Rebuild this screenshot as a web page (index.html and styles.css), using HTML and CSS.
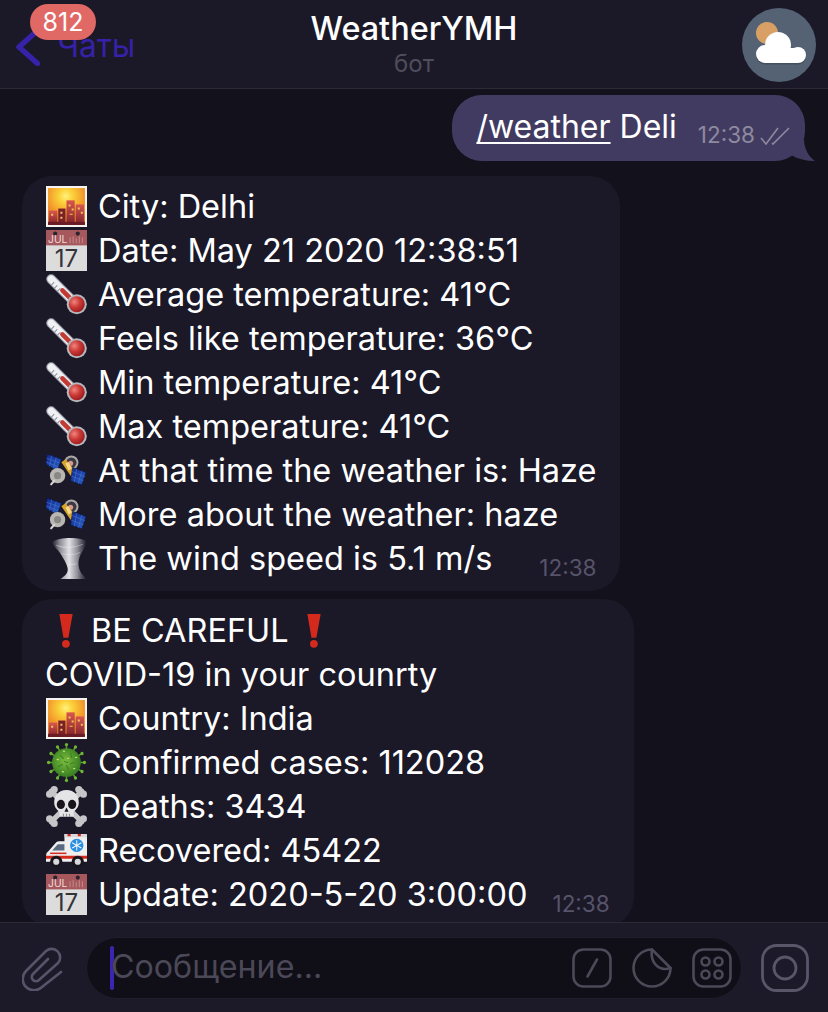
FILE: index.html
```html
<!DOCTYPE html>
<html lang="ru">
<head>
  <meta charset="UTF-8" />
  <meta name="viewport" content="width=device-width, initial-scale=1.0" />
  <title>WeatherYMH</title>
  <link rel="stylesheet" href="styles.css">
</head>
<body>
  <!-- emoji sprites -->
  <svg class="sprite" aria-hidden="true">
    <defs>
      <radialGradient id="sky" cx="0.48" cy="0.22" r="0.85">
        <stop offset="0" stop-color="#fff27e"/>
        <stop offset="0.22" stop-color="#fbd23a"/>
        <stop offset="0.6" stop-color="#f2952a"/>
        <stop offset="1" stop-color="#e4612a"/>
      </radialGradient>
      <linearGradient id="block" x1="0" y1="0" x2="0" y2="1">
        <stop offset="0" stop-color="#d9564e"/>
        <stop offset="1" stop-color="#7c2229"/>
      </linearGradient>
      <radialGradient id="bulb" cx="0.35" cy="0.35" r="0.7">
        <stop offset="0" stop-color="#ef8680"/>
        <stop offset="0.5" stop-color="#cc3a36"/>
        <stop offset="1" stop-color="#9c1a1e"/>
      </radialGradient>
      <linearGradient id="panel" x1="0" y1="0" x2="1" y2="1">
        <stop offset="0" stop-color="#10278f"/>
        <stop offset="1" stop-color="#2a62c4"/>
      </linearGradient>
      <linearGradient id="funnel" x1="0" y1="0" x2="1" y2="0">
        <stop offset="0" stop-color="#77767f" stop-opacity="0.1"/>
        <stop offset="0.22" stop-color="#8c8b94"/>
        <stop offset="0.5" stop-color="#e2e2e6"/>
        <stop offset="0.75" stop-color="#8f8e98"/>
        <stop offset="1" stop-color="#77767f" stop-opacity="0.1"/>
      </linearGradient>
      <radialGradient id="germ" cx="0.45" cy="0.45" r="0.6">
        <stop offset="0" stop-color="#7cbc3e"/>
        <stop offset="1" stop-color="#33791f"/>
      </radialGradient>
      <g id="spike">
        <path d="M20 8 V2.500" stroke="#5aa02e" stroke-width="1.500"/>
        <circle cx="20" cy="2.500" r="1.600" fill="#6cb336"/>
      </g>
    </defs>

    <symbol id="e-city" viewBox="0 0 40 40">
      <rect width="40" height="40" fill="#f6f4f1"/>
      <rect x="2" y="2" width="36" height="36" fill="url(#sky)"/>
      <rect x="3" y="24" width="8" height="14" fill="url(#block)"/>
      <rect x="12" y="22" width="7" height="16" fill="#7a2028"/>
      <rect x="20" y="14" width="8" height="24" fill="url(#block)"/>
      <rect x="29" y="18" width="8" height="20" fill="url(#block)"/>
      <rect x="2" y="35" width="36" height="3" fill="#6a1c24"/>
      <path d="M14 25h2v2h-2zM14 30h2v2h-2zM22 18h2v2h-2zM25 22h2v2h-2zM31 21h2v2h-2zM34 25h2v2h-2zM5 27h2v2H5zM23 27h3v1h-3z" fill="#f2c25a"/>
    </symbol>

    <symbol id="e-cal" viewBox="0 0 40 40">
      <rect width="40" height="40" fill="#dcdcdc"/>
      <rect width="40" height="15" fill="#a6585c"/>
      <circle cx="9" cy="3.500" r="2" fill="#26222e"/>
      <circle cx="31" cy="3.500" r="2" fill="#26222e"/>
      <path d="M23 7h1v6h-1zM26 6h1v7h-1zM29 8h1v5h-1zM32 6h1v7h-1zM35 7h1v6h-1z" fill="#c08a8c"/>
    </symbol>

    <symbol id="e-therm" viewBox="0 0 40 40">
      <path d="M5 5 L26 26" stroke="#a4a8b2" stroke-width="9.500" stroke-linecap="round"/>
      <path d="M5 5 L26 26" stroke="#f0f1f4" stroke-width="7" stroke-linecap="round"/>
      <path d="M16 16 L27 27" stroke="#c23a34" stroke-width="4.500" stroke-linecap="round"/>
      <path d="M5 11 L8 8 M8 14 L11 11 M11 17 L14 14" stroke="#8d93a0" stroke-width="1"/>
      <circle cx="30" cy="29.500" r="9.800" fill="#b4b9be"/>
      <circle cx="30" cy="29.500" r="7.800" fill="url(#bulb)"/>
    </symbol>

    <symbol id="e-sat" viewBox="0 0 40 40">
      <circle cx="24.700" cy="12.300" r="7" fill="#a9a8a6"/>
      <circle cx="24.700" cy="12.300" r="5" fill="#3a3840"/>
      <circle cx="24" cy="13" r="2.500" fill="#d89a8c"/>
      <path d="M15 12 L19 9 L29 21 L24 25 Z" fill="#d6a32c"/>
      <path d="M19 13 L22 12 L25 18 L22 20 Z" fill="#f3d98a"/>
      <path d="M1 4 L15 9 L11 20 L0 14 Z" fill="url(#panel)" stroke="#0a1648" stroke-width=".6"/>
      <path d="M5.500 5.500 L3.500 16 M10 7.500 L7 18 M.5 8 L13 12.500 M0 11.500 L12 16.500" stroke="#4c74d0" stroke-width=".6"/>
      <path d="M26 17 L39 22 L35 34 L24 30 Z" fill="url(#panel)" stroke="#0a1648" stroke-width=".6"/>
      <path d="M30 18.500 L27.500 31.500 M35 20.500 L31.500 33 M25.500 21 L38 26 M24.500 25.500 L36.500 30" stroke="#4c74d0" stroke-width=".6"/>
      <circle cx="11.300" cy="25" r="7.500" fill="#b9b7b2"/>
      <circle cx="11.300" cy="25" r="3.500" fill="#8a8884"/>
      <path d="M8 30 L5 33.500" stroke="#d8d6d2" stroke-width="2" stroke-linecap="round"/>
    </symbol>

    <symbol id="e-storm" viewBox="0 0 40 40">
      <path d="M6 4 C12 -1 34 -1 39 3 C39 9 35 13 33 18 C31 23 31 30 35 35 C37 37 39 39 39 40 H14 C19 37 22 34 21 29 C20 24 17 20 14 15 C11 11 7 8 6 4 Z" fill="url(#funnel)"/>
      <path d="M10 7 C16 10 28 10 36 6 M15 15 C20 17 28 17 33 14 M20 25 C23 26 27 26 30 25" stroke="#f2f2f4" stroke-width="1" fill="none" opacity=".4"/>
    </symbol>

    <symbol id="e-bang" viewBox="0 0 40 40">
      <path d="M14 4 H27 L22.800 27 H18 Z" fill="#d42a1e"/>
      <circle cx="20.400" cy="33" r="3.800" fill="#d42a1e"/>
    </symbol>

    <symbol id="e-virus" viewBox="0 0 40 40">
      <use href="#spike"/>
      <use href="#spike" transform="rotate(30 20 20)"/>
      <use href="#spike" transform="rotate(60 20 20)"/>
      <use href="#spike" transform="rotate(90 20 20)"/>
      <use href="#spike" transform="rotate(120 20 20)"/>
      <use href="#spike" transform="rotate(150 20 20)"/>
      <use href="#spike" transform="rotate(180 20 20)"/>
      <use href="#spike" transform="rotate(210 20 20)"/>
      <use href="#spike" transform="rotate(240 20 20)"/>
      <use href="#spike" transform="rotate(270 20 20)"/>
      <use href="#spike" transform="rotate(300 20 20)"/>
      <use href="#spike" transform="rotate(330 20 20)"/>
      <circle cx="20" cy="20" r="14" fill="url(#germ)"/>
      <path d="M14 13l3 3M24 11l1 4M28 20l-4 1M22 27l-2-4M12 24l4-2M18 19l3 1" stroke="#3b8424" stroke-width="1.200" stroke-linecap="round"/>
      <path d="M11 17h1M17 9h1M29 15h1M27 26h1M16 29h1M21 16h1" stroke="#b2dc74" stroke-width="1.400" stroke-linecap="round"/>
    </symbol>

    <symbol id="e-skull" viewBox="0 0 40 40">
      <path d="M5 5 L35 35 M35 5 L5 35" stroke="#c6c6c8" stroke-width="5" stroke-linecap="round"/>
      <circle cx="3.500" cy="8" r="3.500" fill="#c6c6c8"/><circle cx="8" cy="3.500" r="3.500" fill="#c6c6c8"/>
      <circle cx="36.500" cy="8" r="3.500" fill="#c6c6c8"/><circle cx="32" cy="3.500" r="3.500" fill="#c6c6c8"/>
      <circle cx="3.500" cy="32" r="3.500" fill="#c6c6c8"/><circle cx="8" cy="36.500" r="3.500" fill="#c6c6c8"/>
      <circle cx="36.500" cy="32" r="3.500" fill="#c6c6c8"/><circle cx="32" cy="36.500" r="3.500" fill="#c6c6c8"/>
      <path d="M20 4 C28 4 32 10 32 16 C32 21 29 23 27 25 V30 H13 V25 C11 23 8 21 8 16 C8 10 12 4 20 4 Z" fill="#e4e4e6"/>
      <ellipse cx="14.500" cy="18" rx="4" ry="4.500" fill="#17141c"/>
      <ellipse cx="25.500" cy="18" rx="4" ry="4.500" fill="#17141c"/>
      <path d="M20 21 L22 25 H18 Z" fill="#17141c"/>
      <path d="M17 27v3M20 27v3M23 27v3" stroke="#8b8b8e" stroke-width="1"/>
    </symbol>

    <symbol id="e-amb" viewBox="0 0 40 40">
      <path d="M18 4 H37 Q40 4 40 7 V31 H0 V25 Q0 22 3 20 L10 12 Q11 11 13 11 H18 Z" fill="#efeff0"/>
      <path d="M6 20 L11.500 14 H18 V20 Z" fill="#5a6a80"/>
      <rect x="18" y="4" width="22" height="3" fill="#d8d8da"/>
      <path d="M21 4h3v2h-3zM31 4h3v2h-3z" fill="#d42a1e"/>
      <path d="M0 25 H40 V28 H0 Z" fill="#d42a1e"/>
      <path d="M4 22 H20 V23.500 H4 Z" fill="#d42a1e"/>
      <circle cx="30" cy="15" r="6.500" fill="#2a8fe0"/>
      <path d="M30 10 V20 M25.500 12.500 L34.500 17.500 M34.500 12.500 L25.500 17.500" stroke="#eef6fc" stroke-width="1"/>
      <circle cx="10" cy="31" r="6" fill="#18161c"/><circle cx="10" cy="31" r="3" fill="#d8d8dc"/>
      <circle cx="31" cy="31" r="6" fill="#18161c"/><circle cx="31" cy="31" r="3" fill="#d8d8dc"/>
    </symbol>
  </svg>

  <div class="app">
    <header class="topbar">
      <div class="back">
        <svg class="chevron" viewBox="0 0 24 38"><path d="M21.500 2.500 L3 19 L21.500 35.500"/></svg>
        <span class="back-label">Чаты</span>
        <span class="badge">812</span>
      </div>
      <div class="title">
        <span class="title-name">WeatherYMH</span>
        <span class="title-sub">бот</span>
      </div>
      <div class="avatar-wrap">
        <svg class="avatar" viewBox="0 0 74 74">
          <circle cx="37" cy="37" r="37" fill="#546274"/>
          <circle cx="25" cy="25" r="11" fill="#d9a066"/>
          <g fill="#45505f" transform="translate(0 1.500)">
            <circle cx="23" cy="46" r="9"/><circle cx="36" cy="37" r="13"/><circle cx="56" cy="47" r="8"/><rect x="23" y="40" width="33" height="15"/>
          </g>
          <g fill="#fff">
            <circle cx="23" cy="46" r="9"/><circle cx="36" cy="37" r="13"/><circle cx="56" cy="47" r="8"/><rect x="23" y="40" width="33" height="15"/>
          </g>
        </svg>
      </div>
    </header>

    <main class="chat">
      <div class="bubble-out">
        <span class="out-text"><u>/weather</u> Deli</span>
        <span class="time-out">12:38</span>
        <svg class="checks" viewBox="0 0 30 18"><path d="M1 11 L6 17 L18 1 M12 16 L13 17 L29 1"/></svg>
        <svg class="tail" viewBox="0 0 24 22"><path d="M13 0 C13 10 18 18 24 22 C15 22 7 20 0 16 Z"/></svg>
      </div>

      <div class="bubble-in">
        <div class="row"><svg class="emoji"><use href="#e-city"/></svg>City: Delhi</div>
        <div class="row"><svg class="emoji" viewBox="0 0 40 40"><use href="#e-cal"/><text class="cal-month" x="2" y="13">JUL</text><text class="cal-day" x="20" y="36">17</text></svg>Date: May 21 2020 12:38:51</div>
        <div class="row"><svg class="emoji"><use href="#e-therm"/></svg>Average temperature: 41°C</div>
        <div class="row"><svg class="emoji"><use href="#e-therm"/></svg>Feels like temperature: 36°C</div>
        <div class="row"><svg class="emoji"><use href="#e-therm"/></svg>Min temperature: 41°C</div>
        <div class="row"><svg class="emoji"><use href="#e-therm"/></svg>Max temperature: 41°C</div>
        <div class="row"><svg class="emoji"><use href="#e-sat"/></svg>At that time the weather is: Haze</div>
        <div class="row"><svg class="emoji"><use href="#e-sat"/></svg>More about the weather: haze</div>
        <div class="row"><svg class="emoji"><use href="#e-storm"/></svg>The wind speed is 5.1 m/s<span class="time-in">12:38</span></div>
      </div>

      <div class="bubble-in">
        <div class="row row-tight"><svg class="emoji"><use href="#e-bang"/></svg>BE CAREFUL<svg class="emoji"><use href="#e-bang"/></svg></div>
        <div class="row">COVID-19 in your counrty</div>
        <div class="row"><svg class="emoji"><use href="#e-city"/></svg>Country: India</div>
        <div class="row"><svg class="emoji"><use href="#e-virus"/></svg>Confirmed cases: 112028</div>
        <div class="row"><svg class="emoji"><use href="#e-skull"/></svg>Deaths: 3434</div>
        <div class="row"><svg class="emoji"><use href="#e-amb"/></svg>Recovered: 45422</div>
        <div class="row"><svg class="emoji" viewBox="0 0 40 40"><use href="#e-cal"/><text class="cal-month" x="2" y="13">JUL</text><text class="cal-day" x="20" y="36">17</text></svg>Update: 2020-5-20 3:00:00<span class="time-in">12:38</span></div>
      </div>
    </main>

    <footer class="composer">
      <svg class="clip" viewBox="0 0 41 47"><path d="M39 28 L20 43 A11 11 0 0 1 4 27 L24 7 A8.500 8.500 0 0 1 36 19 L17 36 A4 4 0 0 1 11 30 L26 15"/></svg>
      <div class="input">
        <span class="caret"></span>
        <span class="placeholder">Сообщение...</span>
        <div class="input-icons">
          <svg class="tool" viewBox="0 0 40 40"><rect x="1.500" y="1.500" width="37" height="37" rx="10"/><path d="M15.500 28.500 L25 11.500"/></svg>
          <svg class="tool" viewBox="0 0 40 40"><path d="M20 1.500 A18.500 18.500 0 1 0 38.500 20 Z"/><path d="M20 1.500 C18 14 26 24 38.500 20"/></svg>
          <svg class="tool" viewBox="0 0 40 40"><rect x="1.500" y="1.500" width="37" height="37" rx="10"/><circle cx="13.500" cy="13.500" r="4"/><circle cx="26.500" cy="13.500" r="4"/><circle cx="13.500" cy="26.500" r="4"/><circle cx="26.500" cy="26.500" r="4"/></svg>
        </div>
      </div>
      <svg class="camera" viewBox="0 0 48 48"><rect x="1.500" y="1.500" width="45" height="45" rx="14"/><circle cx="24" cy="24" r="11"/></svg>
    </footer>
  </div>
</body>
</html>
```
FILE: styles.css
```css
* {
  box-sizing: border-box;
}
body {
  margin: 0;
  background-color: #13111c;
  color: #ffffff;
  font-family: Inter, 'Noto Sans', sans-serif;
}
.sprite {
  position: absolute;
  width: 0;
  height: 0;
}
.app {
  display: flex;
  flex-direction: column;
  height: 100vh;
  overflow: hidden;
}

/* top bar */
.topbar {
  display: grid;
  grid-template-columns: 1fr auto 1fr;
  flex: 0 0 89px;
  background-color: #1b1828;
  border-bottom: 1px solid #2c2a39;
}
.back {
  position: relative;
  display: flex;
  align-items: flex-start;
  padding: 28px 0 0 16px;
}
.chevron {
  width: 24px;
  height: 38px;
  fill: none;
  stroke: #3622a8;
  stroke-width: 5.5;
  stroke-linecap: round;
  stroke-linejoin: round;
}
.back-label {
  margin-left: 17px;
  font-size: 31.5px;
  line-height: 36px;
  color: #3622a8;
}
.badge {
  position: absolute;
  left: 30px;
  top: 4px;
  width: 66px;
  height: 36px;
  border-radius: 18px;
  background-color: #e06865;
  font-size: 25px;
  line-height: 36px;
  text-align: center;
}
.title {
  display: flex;
  flex-direction: column;
  align-items: center;
  padding-top: 10px;
}
.title-name {
  font-size: 32.4px;
  font-weight: 500;
  line-height: 38px;
}
.title-sub {
  margin-top: 1px;
  font-size: 24px;
  line-height: 30px;
  color: #4f4d5a;
}
.avatar-wrap {
  display: flex;
  justify-content: flex-end;
  padding: 8px 12px 0 0;
}
.avatar {
  width: 74px;
  height: 74px;
}

/* messages */
.chat {
  flex: 1;
  min-height: 0;
  overflow: hidden;
  display: flex;
  flex-direction: column;
  align-items: flex-start;
  padding: 6px 0 0 22px;
}
.chat > * {
  flex-shrink: 0;
}
.bubble-out {
  position: relative;
  align-self: flex-end;
  display: flex;
  align-items: center;
  height: 66px;
  margin: 0 23px 15px 0;
  padding: 0 15px 0 24px;
  border-radius: 30px;
  background-color: #423b61;
}
.out-text {
  margin-bottom: 2px;
  font-size: 32px;
  line-height: 44px;
}
.out-text u {
  text-underline-offset: 4px;
  text-decoration-thickness: 2px;
}
.time-out {
  margin: 13px 0 0 21px;
  font-size: 22.500px;
  color: #8d8a9f;
}
.checks {
  width: 30px;
  height: 18px;
  margin: 15px 0 0 5px;
  fill: none;
  stroke: #8d8a9f;
  stroke-width: 1.6;
}
.tail {
  position: absolute;
  right: -10px;
  bottom: 0;
  width: 24px;
  height: 22px;
  fill: #423b61;
}
.bubble-in {
  margin-bottom: 8px;
  padding: 9px 24px 10px 23px;
  border-radius: 30px;
  background-color: #1b1828;
}
.bubble-in + .bubble-in {
  padding-top: 10px;
}
.row {
  display: flex;
  align-items: center;
  height: 44px;
  padding-bottom: 2px;
  font-size: 32.5px;
  white-space: nowrap;
}
.emoji {
  flex: 0 0 41px;
  width: 41px;
  height: 41px;
  margin: 0 11px 0 1px;
  overflow: visible;
}
.row-tight .emoji {
  margin: 0 5px 0 0;
}
.row-tight .emoji:last-child {
  margin: 0 0 0 4px;
}
.time-in {
  margin: 18px 0 0 auto;
  padding-left: 25px;
  font-size: 22.500px;
  color: #57546a;
}
.cal-month {
  font-family: Inter, sans-serif;
  font-size: 10px;
  fill: #f0dcdc;
}
.cal-day {
  font-family: Inter, sans-serif;
  font-size: 23.500px;
  fill: #33323a;
  text-anchor: middle;
}

/* bottom input */
.composer {
  flex: 0 0 90px;
  display: flex;
  align-items: center;
  padding: 0 19px 0 22px;
  background-color: #1c1928;
  border-top: 1px solid #2c2a39;
}
.clip {
  flex: 0 0 41px;
  width: 41px;
  height: 47px;
  fill: none;
  stroke: #57546a;
  stroke-width: 2.6;
  stroke-linecap: round;
}
.input {
  flex: 0 0 656px;
  display: flex;
  align-items: center;
  height: 62px;
  margin: 0 19px 0 23px;
  padding: 0 9px 0 23px;
  border: 1px solid #201d2c;
  border-radius: 31px;
  background-color: #100e17;
}
.caret {
  width: 4px;
  height: 44px;
  border-radius: 2px;
  background-color: #3a25b0;
}
.placeholder {
  margin: 0 0 2px -3px;
  font-size: 32.2px;
  color: #4b4857;
}
.input-icons {
  display: flex;
  gap: 20px;
  margin-left: auto;
}
.tool {
  width: 40px;
  height: 40px;
  fill: none;
  stroke: #4c4958;
  stroke-width: 2.6;
  stroke-linecap: round;
  stroke-linejoin: round;
}
.camera {
  width: 48px;
  height: 48px;
  fill: none;
  stroke: #5a5669;
  stroke-width: 2.8;
}
```
